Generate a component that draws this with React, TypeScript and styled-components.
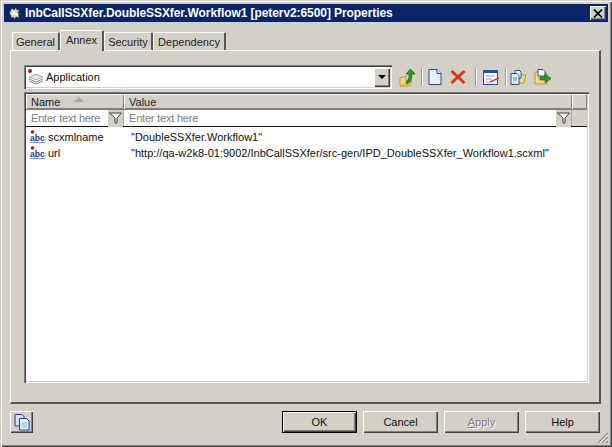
import React from "react";
import styled, { createGlobalStyle, css } from "styled-components";

const Global = createGlobalStyle`
  html, body { margin: 0; padding: 0; background: #d4d0c8; }
  body { font-family: "Liberation Sans", Arial, sans-serif; font-size: 11px; color: #000; }
`;

const raised = css`
  box-shadow: inset 1px 1px 0 #fff, inset -1px -1px 0 #404040, inset -2px -2px 0 #808080;
`;
const sunken = css`
  box-shadow: inset 1px 1px 0 #808080, inset 2px 2px 0 #404040, inset -1px -1px 0 #fff, inset -2px -2px 0 #d4d0c8;
`;

const Win = styled.div`
  width: 612px; height: 447px; box-sizing: border-box; background: #d4d0c8; padding: 4px;
  display: flex; flex-direction: column; position: relative; overflow: hidden;
  box-shadow: inset 1px 1px 0 #d4d0c8, inset 2px 2px 0 #fff, inset -1px -1px 0 #404040, inset -2px -2px 0 #808080;
`;
const Title = styled.div`
  height: 18px; flex: none; background: #0a246a; color: #fff; display: flex; align-items: center;
  padding: 0 2px 0 3px; gap: 2px; font: bold 12px "Liberation Sans", Arial, sans-serif; letter-spacing: -0.08px;
`;
const TitleText = styled.span` flex: 1; white-space: nowrap; `;
const CloseBtn = styled.div`
  width: 16px; height: 14px; background: #d4d0c8; display: flex; align-items: center; justify-content: center; ${raised}
`;
const Content = styled.div`
  flex: 1; display: flex; flex-direction: column; padding: 8px 7px 0 6px;
`;
const TabRow = styled.div`
  display: flex; height: 20px; align-items: flex-end; padding-left: 2px; position: relative; z-index: 1; flex: none;
`;
const Tab = styled.div<{ $w: number; $active?: boolean }>`
  width: ${p => p.$w}px; height: ${p => (p.$active ? 21 : 18)}px; box-sizing: border-box;
  display: flex; justify-content: center; align-items: ${p => (p.$active ? "flex-start" : "center")};
  padding-top: ${p => (p.$active ? 3 : 1)}px; background: #d4d0c8; font-size: 11px; color: #222;
  border-top: 1px solid #fff; border-left: 1px solid #fff; border-right: 2px solid #555;
  border-radius: 2px 2px 0 0; margin-bottom: ${p => (p.$active ? -1 : 0)}px; white-space: nowrap;
`;
const Panel = styled.div`
  height: 354px; box-sizing: border-box; flex: none; padding: 14px 11px 20px 13px;
  border-top: 1px solid #fff; border-left: 1px solid #fff; border-right: 2px solid #555; border-bottom: 2px solid #555;
  display: flex; flex-direction: column; gap: 3px;
`;
const ToolRow = styled.div` display: flex; align-items: center; height: 24px; flex: none; `;
const Combo = styled.div`
  width: 368px; height: 24px; box-sizing: border-box; background: #fff; display: flex; align-items: center;
  padding: 2px 2px 2px 3px; gap: 1px; font-size: 11px; flex: none; ${sunken}
`;
const ComboText = styled.span` flex: 1; color: #111; `;
const ComboArrow = styled.div`
  width: 16px; height: 19px; background: #d4d0c8; display: flex; align-items: center; justify-content: center; ${raised}
`;
const Caret = styled.div`
  width: 0; height: 0; border-left: 4px solid transparent; border-right: 4px solid transparent; border-top: 4px solid #000;
`;
const ToolIcon = styled.div<{ $w: number }>`
  width: ${p => p.$w}px; height: 20px; display: flex; align-items: center; justify-content: center; flex: none;
`;
const Sep = styled.div`
  width: 1px; height: 18px; background: #9a9890; box-shadow: 1px 0 0 #fff; flex: none;
`;
const List = styled.div`
  width: 565px; height: 291px; box-sizing: border-box; background: #fff; padding: 2px;
  display: flex; flex-direction: column; ${sunken}; flex: none;
`;
const HeaderRow = styled.div` display: flex; height: 15px; flex: none; `;
const HeadCell = styled.div<{ $w: number; $blank?: boolean }>`
  width: ${p => p.$w}px; box-sizing: border-box; background: #d4d0c8; padding: 0 0 0 5px; display: flex; align-items: center;
  gap: 14px; font-size: 11px; color: #222; flex: ${p => (p.$blank ? "1" : "none")};
  box-shadow: inset 1px 1px 0 #fff, inset -1px -1px 0 #808080;
`;
const SortArrow = styled.div`
  width: 0; height: 0; border-left: 5px solid transparent; border-right: 5px solid transparent; border-bottom: 5px solid #a8a59d;
  margin-top: -4px;
`;
const FilterRow = styled.div`
  display: flex; height: 18px; flex: none; border-bottom: 1px solid #111; border-top: 1px solid #808080; box-sizing: border-box;
`;
const FilterCell = styled.div<{ $w: number }>`
  width: ${p => p.$w}px; display: flex; align-items: center; flex: none; box-sizing: border-box; border-right: 1px solid #aaa;
  padding-left: 5px; color: #808080; font-size: 11px; letter-spacing: -0.2px;
`;
const FilterLabel = styled.span` flex: 1; white-space: nowrap; `;
const FilterBtn = styled.div`
  width: 15px; height: 17px; background: #d4d0c8; display: flex; align-items: center; justify-content: center; flex: none;
`;
const FilterBlank = styled.div` flex: 1; background: #d4d0c8; `;
const Rows = styled.div` padding-top: 2px; display: flex; flex-direction: column; `;
const Row = styled.div` display: flex; height: 16px; align-items: center; font-size: 11px; color: #111; white-space: nowrap; `;
const NameCell = styled.div` width: 98px; display: flex; align-items: center; gap: 2px; padding-left: 4px; box-sizing: border-box; flex: none; `;
const ValueCell = styled.div` padding-left: 7px; `;
const Footer = styled.div` display: flex; align-items: flex-start; padding-top: 7px; flex: none; `;
const SmallBtn = styled.div`
  width: 23px; height: 22px; display: flex; align-items: center; justify-content: center; flex: none; ${raised}
`;
const Spacer = styled.div` flex: 1; `;
const Btns = styled.div` display: flex; gap: 6px; margin-right: 1px; `;
const Btn = styled.div<{ $def?: boolean; $off?: boolean }>`
  width: 75px; height: 22px; display: flex; align-items: center; justify-content: center; font-size: 11px; box-sizing: border-box;
  color: ${p => (p.$off ? "#808080" : "#111")}; ${p => p.$off && "text-shadow: 1px 1px 0 #fff;"}
  ${p => p.$def
    ? "border: 1px solid #000; box-shadow: inset 1px 1px 0 #fff, inset -1px -1px 0 #404040, inset -2px -2px 0 #808080;"
    : raised}
`;
const Under = styled.span` text-decoration: underline; `;
const Grip = styled.svg` position: absolute; right: 3px; bottom: 3px; `;

const AttrIcon = () => (
  <svg width="16" height="15" viewBox="0 0 16 15">
    <circle cx="2.500" cy="2" r="1.800" fill="#b81030" />
    <text x="0" y="11" fontFamily="Liberation Sans" fontSize="8.500" fontWeight="bold" fill="#203a90">abc</text>
    <path d="M0 12.500h15" stroke="#8a96c8" />
  </svg>
);
const StackIcon = () => (
  <svg width="18" height="18" viewBox="0 0 18 18">
    <path d="M2 9l7-3 7 3-7 3z" fill="#e4e4e4" stroke="#8a8a8a" strokeWidth=".7" />
    <path d="M2 11l7 3 7-3M2 13l7 3 7-3" fill="none" stroke="#8a8a8a" />
    <circle cx="3" cy="3" r="2" fill="#c01030" />
  </svg>
);
const FolderUp = () => (
  <svg width="16" height="19" viewBox="0 0 16 19">
    <path d="M1 10l6-2v7l-6 3z" fill="#f3d77e" stroke="#a98a2c" strokeWidth=".8" />
    <path d="M1 18h9l3-5H7" fill="#f0c84a" stroke="#a98a2c" strokeWidth=".8" />
    <path d="M7 14c3-2 3-5 3-8H7l4.500-5L16 6h-3c0 4-1 8-5 10z" fill="#2a9a2a" stroke="#0e5e0e" strokeWidth=".7" />
  </svg>
);
const NewDoc = () => (
  <svg width="14" height="16" viewBox="0 0 14 16">
    <path d="M1 .5h8l4 4v11H1z" fill="#e8f2fc" stroke="#1c4fa8" />
    <path d="M9 .5v4h4" fill="#fff" stroke="#1c4fa8" />
  </svg>
);
const RedX = () => (
  <svg width="16" height="14" viewBox="0 0 16 14">
    <path d="M1.500 1l13 12M14.500 1l-13 12" stroke="#d8341a" strokeWidth="2.800" />
  </svg>
);
const FormIcon = () => (
  <svg width="16" height="15" viewBox="0 0 16 15">
    <rect x=".5" y=".5" width="14" height="14" fill="#fff" stroke="#1c4fa8" />
    <rect x="0" y="0" width="15" height="3" fill="#1c4fa8" />
    <path d="M3 6h9M3 9h6M3 12h4" stroke="#7f9ccc" />
    <path d="M7 12l9-4" stroke="#b04050" strokeWidth="1.400" />
  </svg>
);
const DocFolder = () => (
  <svg width="16" height="15" viewBox="0 0 16 15">
    <path d="M8 5h8l-2 8H8z" fill="#f3d77e" stroke="#a98a2c" strokeWidth=".8" />
    <path d="M5 .5h5l1 2V8H5z" fill="#fff" stroke="#1c4fa8" />
    <path d="M1 3.500h6l2 2v9H1z" fill="#e8f2fc" stroke="#1c4fa8" />
    <path d="M3 8h4M3 10h4" stroke="#2a9a7a" />
  </svg>
);
const FolderArrow = () => (
  <svg width="17" height="16" viewBox="0 0 17 16">
    <path d="M1 3h5l1 1h6v11H1z" fill="#f3d77e" stroke="#a98a2c" strokeWidth=".8" />
    <path d="M4 .5h5l2 2V7H4z" fill="#fff" stroke="#1c4fa8" />
    <path d="M6 8h5V5l6 4.500-6 4.500v-3H6z" fill="#2a9a2a" stroke="#0e5e0e" strokeWidth=".6" />
  </svg>
);
const Funnel = () => (
  <svg width="13" height="12" viewBox="0 0 13 12">
    <path d="M.5 1h12L8 6v5H6V6z" fill="#f2f2f2" stroke="#333" strokeWidth=".9" />
  </svg>
);
const Copies = () => (
  <svg width="16" height="17" viewBox="0 0 16 17">
    <path d="M1 .5h7l2 2V12H1z" fill="#cfe0f8" stroke="#1c3fa0" />
    <path d="M5.500 4.500h7l2.500 2.500v9h-9.500z" fill="#e3f0fc" stroke="#1c3fa0" />
    <path d="M7.500 9h5.500M7.500 11h5.500M7.500 13h5.500" stroke="#8fb4e0" />
  </svg>
);
const AppIcon = () => (
  <svg width="16" height="16" viewBox="0 0 16 16">
    <path d="M2 8l3-5 2 2 2-3 1 3 3-1-2 4 3 1-3 1 2 3-4-1-1 3-2-3-2 2v-3z" fill="#d4d0c8" stroke="#222" strokeWidth=".7" />
    <path d="M5 5l6 6M5 10l3-4" stroke="#fff" strokeWidth="1.600" />
  </svg>
);

export default function App() {
  return (
    <>
      <Global />
      <Win>
        <Title>
          <AppIcon />
          <TitleText>InbCallSSXfer.DoubleSSXfer.Workflow1 [peterv2:6500] Properties</TitleText>
          <CloseBtn>
            <svg width="10" height="9" viewBox="0 0 10 9"><path d="M1 .5l8 8M9 .5l-8 8" stroke="#000" strokeWidth="1.700" /></svg>
          </CloseBtn>
        </Title>
        <Content>
          <TabRow>
            <Tab $w={48}>General</Tab>
            <Tab $w={44} $active>Annex</Tab>
            <Tab $w={49}>Security</Tab>
            <Tab $w={73}>Dependency</Tab>
          </TabRow>
          <Panel>
            <ToolRow>
              <Combo>
                <StackIcon />
                <ComboText>Application</ComboText>
                <ComboArrow><Caret /></ComboArrow>
              </Combo>
              <ToolIcon $w={29}><FolderUp /></ToolIcon>
              <Sep />
              <ToolIcon $w={26}><NewDoc /></ToolIcon>
              <ToolIcon $w={20}><RedX /></ToolIcon>
              <ToolIcon $w={7} />
              <Sep />
              <ToolIcon $w={29}><FormIcon /></ToolIcon>
              <Sep />
              <ToolIcon $w={24}><DocFolder /></ToolIcon>
              <ToolIcon $w={24}><FolderArrow /></ToolIcon>
            </ToolRow>
            <List>
              <HeaderRow>
                <HeadCell $w={98}>Name<SortArrow /></HeadCell>
                <HeadCell $w={448}>Value</HeadCell>
                <HeadCell $w={14} $blank />
              </HeaderRow>
              <FilterRow>
                <FilterCell $w={98}><FilterLabel>Enter text here</FilterLabel><FilterBtn><Funnel /></FilterBtn></FilterCell>
                <FilterCell $w={448}><FilterLabel>Enter text here</FilterLabel><FilterBtn><Funnel /></FilterBtn></FilterCell>
                <FilterBlank />
              </FilterRow>
              <Rows>
                <Row>
                  <NameCell><AttrIcon />scxmlname</NameCell>
                  <ValueCell>"DoubleSSXfer.Workflow1"</ValueCell>
                </Row>
                <Row>
                  <NameCell><AttrIcon />url</NameCell>
                  <ValueCell>"http://qa-w2k8-01:9002/InbCallSSXfer/src-gen/IPD_DoubleSSXfer_Workflow1.scxml"</ValueCell>
                </Row>
              </Rows>
            </List>
          </Panel>
          <Footer>
            <SmallBtn><Copies /></SmallBtn>
            <Spacer />
            <Btns>
              <Btn $def>OK</Btn>
              <Btn>Cancel</Btn>
              <Btn $off><Under>A</Under>pply</Btn>
              <Btn>Help</Btn>
            </Btns>
          </Footer>
        </Content>
        <Grip width="12" height="12" viewBox="0 0 12 12">
          <path d="M11 1L1 11M11 5l-6 6M11 9l-2 2" stroke="#808080" strokeWidth="1.200" />
          <path d="M11 2.500L2.500 11M11 6.500L6.500 11" stroke="#fff" />
        </Grip>
      </Win>
    </>
  );
}
